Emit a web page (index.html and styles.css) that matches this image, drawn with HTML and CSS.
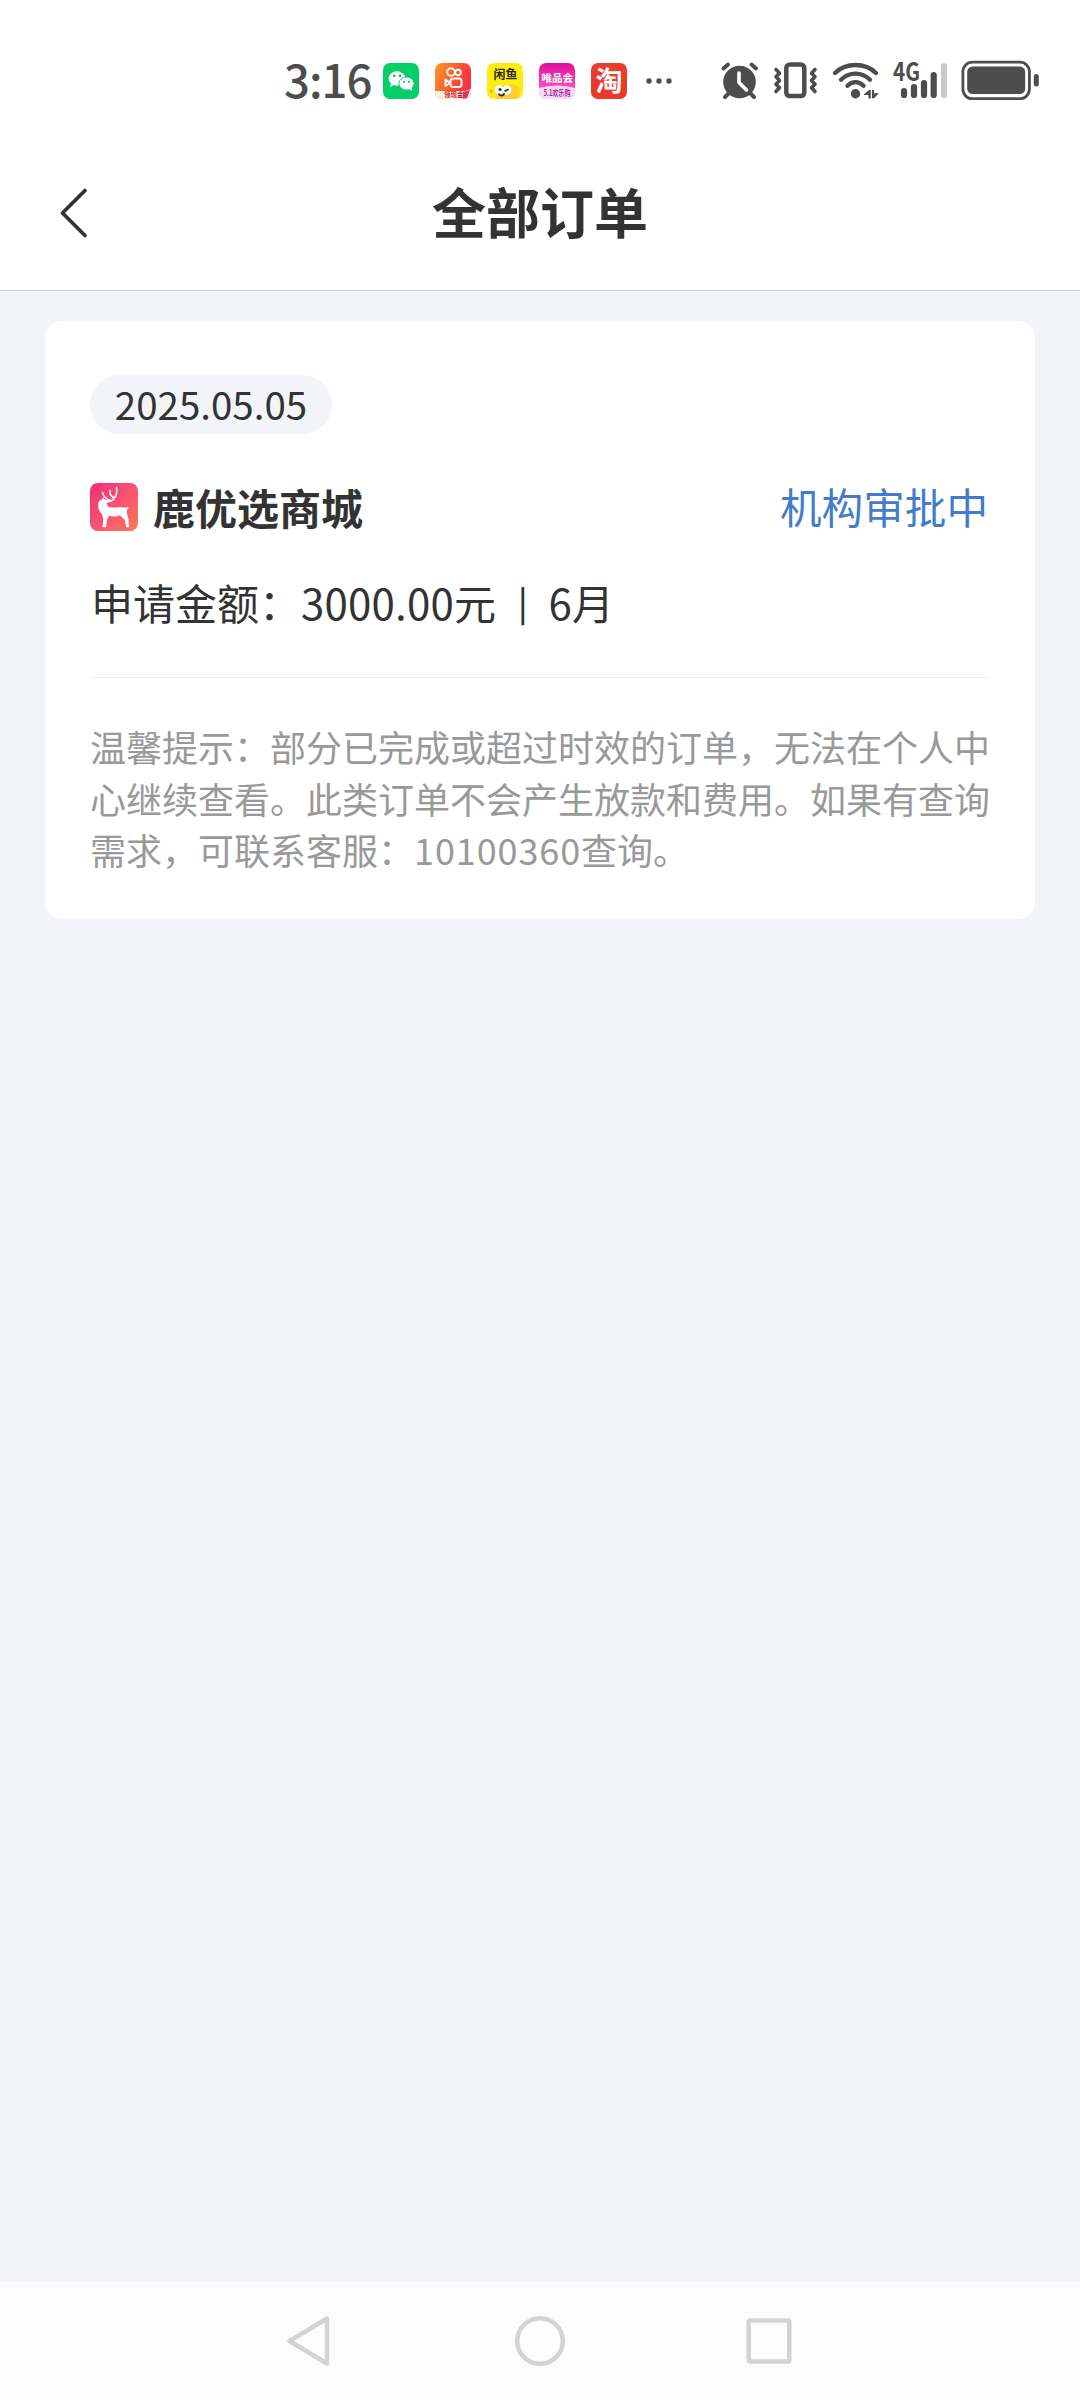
FILE: index.html
```html
<!DOCTYPE html>
<html lang="zh-CN">
<head>
    <meta charset="UTF-8">
    <meta name="viewport" content="width=device-width, initial-scale=1.0">
    <title>全部订单</title>
    <link rel="stylesheet" href="styles.css">
</head>
<body>

    <!-- Status Bar -->
    <div class="status-bar">
        <span class="clock">3:16</span>
        <div class="app-icons">
            <!-- WeChat -->
            <svg width="36" height="36" viewBox="0 0 36 36">
                <rect width="36" height="36" rx="7" fill="#07cf67"/>
                <path d="M8 20l-1 4 4-2z" fill="#fff"/>
                <ellipse cx="14" cy="15.500" rx="8.400" ry="7.200" fill="#fff"/>
                <ellipse cx="23.500" cy="20.500" rx="7.600" ry="6.600" fill="#fff" stroke="#07cf67" stroke-width="1"/>
                <path d="M26 26l3.300 1.800-.6-3.600z" fill="#fff"/>
                <g fill="#07a854">
                    <circle cx="11.300" cy="12.800" r="1.200"/>
                    <circle cx="17" cy="12.800" r="1.200"/>
                    <circle cx="21" cy="18.800" r="1"/>
                    <circle cx="26" cy="18.800" r="1"/>
                </g>
            </svg>
            <!-- Kuaishou -->
            <svg width="36" height="36" viewBox="0 0 36 36">
                <defs>
                    <linearGradient id="ks" x1="0" y1="0" x2="1" y2="0.500">
                        <stop offset="0" stop-color="#ff9a2c"/>
                        <stop offset="0.700" stop-color="#ff4a2e"/>
                        <stop offset="1" stop-color="#f5304f"/>
                    </linearGradient>
                    <clipPath id="ks-clip"><rect width="36" height="36" rx="7"/></clipPath>
                </defs>
                <g clip-path="url(#ks-clip)">
                    <rect width="36" height="36" fill="url(#ks)"/>
                    <path d="M0 28h30l6-2v10H0z" fill="#fff0e4"/>
                    <path d="M28 29l7-2-3 8-4 1z" fill="#e9304b"/>
                </g>
                <g fill="none" stroke="#fff" stroke-width="1.900">
                    <circle cx="16" cy="9" r="3.800"/>
                    <circle cx="23" cy="9.500" r="2.800"/>
                    <rect x="15.500" y="15.500" width="11" height="8.500" rx="2.500"/>
                    <path d="M10.500 16.500v6.500l4.500-3.200z" stroke-linejoin="round"/>
                </g>
                <text x="9" y="34.200" class="icon-text" font-size="6.500" fill="#c9202c">领现金</text>
            </svg>
            <!-- Xianyu -->
            <svg width="36" height="36" viewBox="0 0 36 36">
                <defs><clipPath id="xy-clip"><rect width="36" height="36" rx="7"/></clipPath></defs>
                <g clip-path="url(#xy-clip)">
                    <rect width="36" height="36" fill="#ffee0a"/>
                    <path d="M9 36c-2-9 2-14 9-13 8-3 16 0 15 6 0 4-2 6-4 7z" fill="#fbd02d"/>
                    <path d="M2 28l4-2-1 5z" fill="#e8b91c"/>
                </g>
                <ellipse cx="12" cy="27" rx="4.300" ry="4.800" fill="#fff"/>
                <ellipse cx="20" cy="27" rx="4.500" ry="4.800" fill="#fff"/>
                <circle cx="13" cy="26.500" r="1.500" fill="#222"/>
                <path d="M18 28l3-1.500M12 31c1.500 2.500 5 2 5-.5" fill="none" stroke="#222" stroke-width="1.600" stroke-linecap="round"/>
                <text x="6.500" y="15.500" class="icon-text" font-size="12" fill="#2a2610">闲鱼</text>
            </svg>
            <!-- Vipshop -->
            <svg width="36" height="36" viewBox="0 0 36 36">
                <defs>
                    <linearGradient id="vip" x1="0" y1="0" x2="0" y2="1">
                        <stop offset="0" stop-color="#dd109c"/>
                        <stop offset="0.600" stop-color="#fb42bd"/>
                        <stop offset="1" stop-color="#ff70cf"/>
                    </linearGradient>
                    <clipPath id="vip-clip"><rect width="36" height="36" rx="7"/></clipPath>
                </defs>
                <g clip-path="url(#vip-clip)">
                    <rect width="36" height="36" fill="url(#vip)"/>
                    <path d="M0 25q18-5 36 0v11H0z" fill="#fbdcf8"/>
                </g>
                <text x="2.500" y="18.500" class="icon-text" font-size="10.500" fill="#fff">唯品会</text>
                <text x="4.500" y="32.500" class="icon-text" font-size="8.500" textLength="27" lengthAdjust="spacingAndGlyphs" fill="#b01ca0">5.1欢乐购</text>
            </svg>
            <!-- Taobao -->
            <svg width="36" height="36" viewBox="0 0 36 36">
                <rect width="36" height="36" rx="7" fill="#e93a2e"/>
                <text x="4.500" y="27.500" class="icon-text" font-size="27" fill="#fff">淘</text>
            </svg>
        </div>
        <svg class="more" width="28" height="8" viewBox="0 0 28 8" fill="#4d4d4d">
            <circle cx="4" cy="4" r="2.700"/>
            <circle cx="14" cy="4" r="2.700"/>
            <circle cx="24" cy="4" r="2.700"/>
        </svg>

        <!-- Alarm -->
        <svg class="alarm" width="38" height="38" viewBox="0 0 38 38" fill="none" stroke-linecap="round">
            <circle cx="18.500" cy="20" r="16.300" fill="#4d4d4d"/>
            <path d="M2.500 6.500l4.500-4M30.500 2.500l4.500 4M7.500 31.500l-3.500 3.500M29.500 31.500l3.500 3.500" stroke="#4d4d4d" stroke-width="4"/>
            <path d="M18 11v9.500l7.500 7.500" stroke="#fff" stroke-width="3.600" stroke-linejoin="round"/>
        </svg>
        <!-- Vibrate -->
        <svg class="vibrate" width="46" height="38" viewBox="0 0 46 38" fill="none" stroke="#4d4d4d" stroke-linecap="round" stroke-linejoin="round">
            <rect x="13.300" y="2.500" width="18" height="31.600" rx="3.500" stroke-width="4.500"/>
            <path d="M3 7.500l3.500 3.700L3 14.800l3.500 3.700L3 22.200l3.500 3.600L3 29.500M42 7.500l-3.500 3.700 3.500 3.600-3.500 3.700 3.500 3.700-3.500 3.600 3.500 3.700" stroke-width="3.600"/>
        </svg>
        <!-- Wifi -->
        <svg class="wifi" width="48" height="38" viewBox="0 0 48 38" fill="none" stroke="#4d4d4d" stroke-linecap="round">
            <path d="M3 11C14 .3 33 .3 44 11" stroke-width="4.300"/>
            <path d="M9 17.700C17 9.500 30 9.500 38 17.700" stroke-width="4.300"/>
            <path d="M15.500 23.800C20 18.900 27 18.900 31.500 23.800" stroke-width="4.300"/>
            <circle cx="23.500" cy="31.800" r="4.700" fill="#4d4d4d" stroke="none"/>
            <path d="M32 32.300l5-4.300h1.800v8.500H36.500v-3.500H32zM40 28h2v3.200h5l-5 5H40z" fill="#4d4d4d" stroke="none"/>
        </svg>
        <!-- Signal -->
        <svg class="signal" width="56" height="38" viewBox="0 0 56 38">
            <text x="0" y="18.500" class="net-text" textLength="27" lengthAdjust="spacingAndGlyphs" fill="#4d4d4d">4G</text>
            <g stroke="#4d4d4d" stroke-width="6.200" stroke-linecap="round">
                <path d="M11 29v4M21 25v8M31 21v12M40.700 13v20"/>
                <path d="M51 4v29" stroke="#cacaca"/>
            </g>
        </svg>
        <!-- Battery -->
        <svg class="battery" width="78" height="40" viewBox="0 0 78 40">
            <rect x="1.900" y="1.200" width="66.500" height="36.500" rx="9.500" fill="none" stroke="#4d4d4d" stroke-width="2.800"/>
            <rect x="6.200" y="5.500" width="58" height="27.500" rx="5.500" fill="#4d4d4d"/>
            <rect x="72.800" y="13" width="5" height="12.500" rx="2.500" fill="#4d4d4d"/>
        </svg>
    </div>

    <!-- Page Header -->
    <div class="header">
        <a class="back">
            <svg width="28" height="50" viewBox="0 0 28 50" fill="none" stroke="#333" stroke-width="3.800" stroke-linecap="round" stroke-linejoin="round">
                <path d="M25 2.500L2.500 25 25 47.500"/>
            </svg>
        </a>
        <h1>全部订单</h1>
    </div>

    <!-- Order List -->
    <div class="content">
        <div class="order-card">
            <div class="order-date">2025.05.05</div>
            <div class="order-row">
                <svg width="48" height="48" viewBox="0 0 48 48">
                    <defs>
                        <linearGradient id="deer" x1="0" y1="0" x2="1" y2="1">
                            <stop offset="0" stop-color="#f22d80"/>
                            <stop offset="1" stop-color="#fb7a5c"/>
                        </linearGradient>
                    </defs>
                    <rect width="48" height="48" rx="8" fill="url(#deer)"/>
                    <path d="M9 18l3-1.500 1-2 1.500 2 5 1.500-3 2 1.500 3.500c3 2 9 .5 13 .700 2.500.2 4 .8 6 0l2 .300-2 2.200c-.5 3 .5 6 1.500 9l.5 8.500h-2.700l-1.300-7-5-5c-4 1.500-8 1.500-11 .500l-2 4-1 7.500h-3.500l.8-8-1.300-5c-3-3-4.500-6-3.500-12z" fill="#fff"/>
                    <path d="M15 18.500c7 1.500 13-4 11.500-14M20.500 17.500c-4-1-7-4-8-8M23.500 14.500c-2.500-1.500-4-4-3.500-7" fill="none" stroke="#fff" stroke-width="1.500" stroke-linecap="round"/>
                </svg>
                <span class="shop-name">鹿优选商城</span>
                <span class="order-status">机构审批中</span>
            </div>
            <div class="order-amount">申请金额：<span class="num">3000.00</span>元<span class="sep">|</span><span class="num">6</span>月</div>
            <p class="order-tip">温馨提示：部分已完成或超过时效的订单，无法在个人中<br>心继续查看。此类订单不会产生放款和费用。如果有查询<br>需求，可联系客服：<span class="tel">10100360</span>查询。</p>
        </div>
    </div>

    <!-- System Navigation -->
    <div class="nav-bar">
        <svg width="50" height="52" viewBox="0 0 50 52"><path d="M3.500 26L41 3.500v45z"/></svg>
        <svg width="50" height="52" viewBox="0 0 50 52"><circle cx="25" cy="26" r="22.800"/></svg>
        <svg width="50" height="52" viewBox="0 0 50 52"><rect x="4.700" y="5.500" width="40.600" height="41" rx="1.500"/></svg>
    </div>

</body>
</html>
```
FILE: styles.css
```css
* {box-sizing: border-box;}
body {margin: 0;height: 2400px;display: flex;flex-direction: column;font-family: "Noto Sans CJK SC", sans-serif;background-color: #f2f4f8;color: #333;overflow: hidden;}
svg {display: block;flex: none;overflow: visible;}
.status-bar {display: flex;align-items: center;height: 162px;padding: 0 0 0 284px;background-color: #fff;}
.clock {width: 99px;padding-bottom: 6px;font-size: 45.500px;font-weight: 500;line-height: 60px;letter-spacing: -1px;color: #4d4d4d;white-space: nowrap;}
.app-icons {display: flex;gap: 16px;}
.icon-text {font-weight: 700;}
.net-text {font-size: 25px;font-weight: 700;}
.more {margin-left: 18px;}
.alarm {margin-left: 48px;}
.vibrate {margin-left: 14px;}
.wifi {margin-left: 13px;}
.signal {margin-left: 13px;}
.battery {margin-left: 12px;}
.header {display: flex;align-items: center;height: 129px;padding: 0 60px 26px;background-color: #fff;border-bottom: 1px solid #cbccd0;}
.header h1 {flex: 1;margin: 0 28px 0 0;padding-bottom: 5px;text-align: center;font-size: 54px;font-weight: 700;line-height: 80px;}
.back {width: 28px;}
.content {flex: 1;padding: 30px 45px;}
.order-card {height: 598px;padding: 54px 45px 0;background-color: #fff;border-radius: 17px;}
.order-date {width: 242px;height: 59px;border-radius: 30px;background-color: #f2f4f8;text-align: center;font-size: 38.500px;line-height: 57px;}
.order-row {display: flex;align-items: center;height: 48px;margin-top: 49px;}
.shop-name {margin-left: 15px;padding-bottom: 1px;font-size: 42px;font-weight: 700;line-height: 47px;}
.order-status {margin-left: auto;margin-right: 2px;padding-bottom: 1px;font-size: 41.600px;line-height: 47px;color: #437bce;}
.order-amount {height: 146px;padding-top: 41px;margin-left: 1px;font-size: 42px;line-height: 60px;white-space: nowrap;}
.order-amount .num {letter-spacing: 0.200px;}
.sep {display: inline-block;margin: 0 21px 0 22px;font-size: 34px;font-weight: 500;line-height: 34px;vertical-align: 4px;}
.order-tip {margin: 0;padding-top: 43px;border-top: 1px solid #eee;font-size: 36px;line-height: 51.500px;color: #999;white-space: nowrap;}
.tel {letter-spacing: 0.900px;}
.nav-bar {display: flex;justify-content: center;align-items: center;gap: 179px;height: 118px;background-color: #fcfcfc;}
.nav-bar svg {fill: none;stroke: #d3d3d3;stroke-width: 4.500;stroke-linejoin: round;}
```
